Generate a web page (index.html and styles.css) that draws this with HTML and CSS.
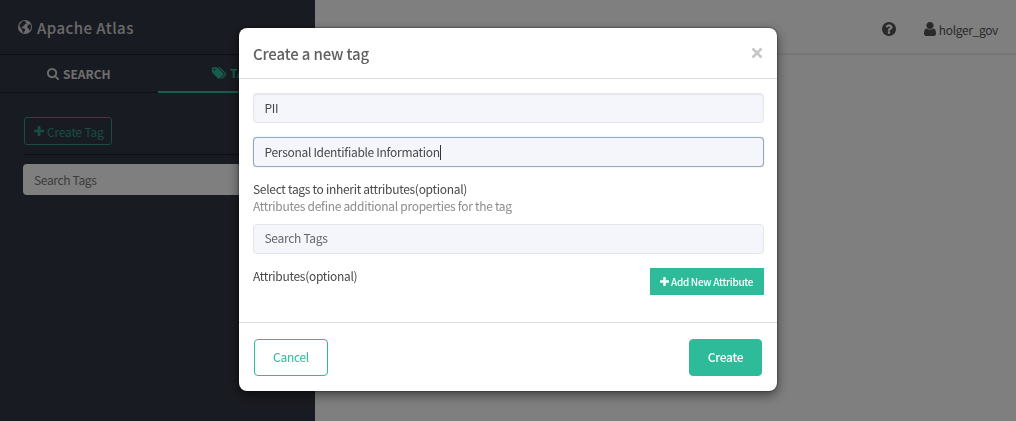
FILE: index.html
```html
<!DOCTYPE html>
<html lang="en">
<head>
<meta charset="utf-8">
<title>Apache Atlas</title>
<link rel="stylesheet" href="styles.css">
</head>
<body>
<div class="page">
  <aside class="sidebar">
    <div class="brand">
      <svg class="globe" viewBox="0 0 14 14"><circle cx="7" cy="7" r="7"/><path class="land" d="M4.2 1.5 6 .8 7.6 1.2 7 2.2 8.3 2.4 8.6 3.4 7.2 4 6.4 5.2 5.2 5.8 5.5 7.2 4.2 6.6 3.3 7.2 4.3 8.3 6 8.5 7.3 9.6 6.7 11 5.5 12.8 4.6 12.5 4.3 10.2 2.9 8.6 1.5 6.3 1.7 4.4ZM9.6 5.5 11 4.3 12.6 4.8 13.1 7 12.5 9.3 11.2 10.4 10.7 8.5 9.3 7.7Z"/></svg>
      <span>Apache Atlas</span>
    </div>
    <nav class="tabs">
      <a class="tab"><svg class="icon-search" viewBox="64 128 1664 1664"><path d="M1216 832q0-185-131.500-316.500t-316.500-131.500-316.500 131.500-131.500 316.500 131.500 316.500 316.500 131.500 316.500-131.500 131.500-316.500zm512 832q0 52-38 90t-90 38q-54 0-90-38l-343-342q-179 124-399 124-143 0-273.500-55.500t-225-150-150-225-55.500-273.500 55.500-273.500 150-225 225-150 273.500-55.500 273.500 55.500 225 150 150 225 55.500 273.500q0 220-124 399l343 343q37 37 37 90z"/></svg><span>SEARCH</span></a>
      <a class="tab active"><svg class="icon-tags" viewBox="192 256 1835 1516"><path d="M576 448q0-53-37.500-90.500t-90.500-37.500-90.500 37.500-37.500 90.500 37.500 90.500 90.500 37.500 90.500-37.500 37.500-90.500zm1067 576q0 53-37 90l-491 492q-39 37-91 37-53 0-90-37l-715-716q-38-37-64.500-101t-26.500-117v-416q0-52 38-90t90-38h416q53 0 117 26.500t102 64.500l715 714q37 39 37 91zm384 0q0 53-37 90l-491 492q-39 37-91 37-36 0-59-14t-53-45l470-470q37-37 37-90 0-52-37-91l-715-714q-38-38-102-64.500t-117-26.500h224q53 0 117 26.500t102 64.500l715 714q37 39 37 91z" transform="translate(64 128)"/></svg><span>TAGS</span></a>
    </nav>
    <div class="side-body">
      <button class="create-tag"><svg class="icon-plus" viewBox="192 128 1408 1408"><path d="M1600 736v192q0 40-28 68t-68 28h-416v416q0 40-28 68t-68 28h-192q-40 0-68-28t-28-68v-416h-416q-40 0-68-28t-28-68v-192q0-40 28-68t68-28h416v-416q0-40 28-68t68-28h192q40 0 68 28t28 68v416h416q40 0 68 28t28 68z"/></svg><span>Create Tag</span></button>
      <div class="rule"></div>
      <div class="side-search">Search Tags</div>
    </div>
  </aside>
  <main class="content">
    <header class="topbar">
      <svg class="icon-help" viewBox="128 128 1536 1536"><path d="M1024 1376v-192q0-14-9-23t-23-9h-192q-14 0-23 9t-9 23v192q0 14 9 23t23 9h192q14 0 23-9t9-23zm256-672q0-88-55.500-163t-138.500-116-170-41q-243 0-371 213-15 24 8 42l132 100q7 6 19 6 16 0 25-12 53-68 86-92 34-24 86-24 48 0 85.500 26t37.500 59q0 38-20 61t-68 45q-63 28-115.500 86.500t-52.500 125.500v36q0 14 9 23t23 9h192q14 0 23-9t9-23q0-19 21.500-49.500t54.500-49.500q32-18 49-28.500t46-35 44.500-48 28-60.500 12.500-81zm384 192q0 209-103 385.500t-279.500 279.500-385.500 103-385.500-103-279.500-279.500-103-385.500 103-385.500 279.500-279.500 385.500-103 385.500 103 279.500 279.500 103 385.500z"/></svg>
      <svg class="icon-user" viewBox="256 128 1280 1536" preserveAspectRatio="none"><path d="M1536 1399q0 109-62.500 187t-150.500 78h-854q-88 0-150.500-78t-62.500-187q0-85 8.500-160.500t31.500-152 58.500-131 94-89 134.500-34.500q131 128 313 128t313-128q76 0 134.500 34.500t94 89 58.500 131 31.500 152 8.500 160.500zm-256-887q0 159-112.500 271.500t-271.500 112.500-271.500-112.500-112.500-271.500 112.500-271.500 271.500-112.500 271.500 112.500 112.500 271.500z"/></svg>
      <span class="username">holger_gov</span>
    </header>
  </main>
</div>
<div class="backdrop">
  <section class="modal">
    <header class="modal-header">
      <h1 class="modal-title">Create a new tag</h1>
      <svg class="close" viewBox="0 0 12 12"><path d="M1.500 1.500 10.500 10.500M10.500 1.500 1.500 10.500"/></svg>
    </header>
    <div class="modal-body">
      <div class="field inset"><span class="pii">PII</span></div>
      <div class="field focused"><span class="value">Personal Identifiable Information</span><i class="caret"></i></div>
      <div class="labels">
        <div class="label"><span class="inherit">Select tags to inherit attributes(optional)</span></div>
        <div class="hint"><span>Attributes define additional properties for the tag</span></div>
      </div>
      <div class="field placeholder"><span>Search Tags</span></div>
      <div class="attributes">
        <div class="label"><span>Attributes(optional)</span></div>
        <button class="add"><svg class="icon-plus" viewBox="192 128 1408 1408"><path d="M1600 736v192q0 40-28 68t-68 28h-416v416q0 40-28 68t-68 28h-192q-40 0-68-28t-28-68v-416h-416q-40 0-68-28t-28-68v-192q0-40 28-68t68-28h416v-416q0-40 28-68t68-28h192q40 0 68 28t28 68v416h416q40 0 68 28t28 68z"/></svg><span>Add New Attribute</span></button>
      </div>
    </div>
    <footer class="modal-footer">
      <button class="btn cancel">Cancel</button>
      <button class="btn create">Create</button>
    </footer>
  </section>
</div>
</body>
</html>
```
FILE: styles.css
```css
* { box-sizing: border-box; }
body {
  margin: 0;
  height: 421px;
  overflow: hidden;
  font-family: "Noto Sans CJK SC", "Noto Sans", sans-serif;
  font-size: 12px;
  line-height: 16px;
  letter-spacing: -0.3px;
  color: #484848;
}
button { font: inherit; letter-spacing: inherit; padding: 0; margin: 0; white-space: nowrap; }
svg { fill: currentColor; flex: none; display: block; }
.page { display: flex; height: 421px; background: #fff; }
.sidebar { width: 315px; background: #333744; }
.brand {
  display: flex;
  align-items: center;
  height: 55px;
  padding: 0 0 0 18px;
  gap: 5px;
  border-bottom: 1px solid #1c1e24;
  color: #d4d4d4;
  font-size: 15px;
  font-weight: 500;
  letter-spacing: 0.45px;
}
.brand span { padding-top: 2px; }
.globe { width: 14px; height: 14px; }
.land { fill: #333744; }
.tabs { display: flex; height: 38px; border-bottom: 1px solid #1c1e24; }
.tab {
  display: flex;
  align-items: center;
  justify-content: center;
  gap: 4px;
  width: 158px;
  height: 38px;
  color: #ddd;
  font-weight: 700;
  letter-spacing: 0;
}
.active { color: #2dbb9a; border-bottom: 2px solid #2dbb9a; }
.icon-search { width: 12px; height: 12px; }
.icon-tags { width: 14px; height: 12px; }
.side-body { padding: 24px 23px; }
.create-tag {
  display: flex;
  align-items: center;
  gap: 3px;
  width: 88px;
  height: 28px;
  margin-left: 1px;
  padding-left: 9px;
  border: 1px solid #2dbb9a;
  border-radius: 3px;
  background: none;
  color: #2dbb9a;
  letter-spacing: -0.2px;
  opacity: .75;
}
.icon-plus { width: 10px; height: 10px; }
.create-tag span { padding-top: 1px; }
.rule { height: 1px; margin: 9px 0; background: #1c1e24; }
.side-search {
  height: 31px;
  padding: 8px 11px;
  border-radius: 4px;
  background: #fff;
  color: #777;
  letter-spacing: -0.35px;
}
.content { flex: 1; }
.topbar {
  display: flex;
  align-items: center;
  justify-content: flex-end;
  height: 55px;
  padding: 5px 18px 0 0;
  border-bottom: 2px solid #eee;
  color: #555;
}
.icon-help { width: 14px; height: 14px; margin-right: 28px; }
.icon-user { width: 12px; height: 14px; margin-right: 3px; }
.username { padding-top: 1px; letter-spacing: -0.35px; }
.backdrop {
  position: fixed;
  inset: 0;
  padding: 28px 239px;
  background: rgba(0, 0, 0, .5);
}
.modal {
  width: 538px;
  height: 363px;
  border-radius: 8px;
  background: #fff;
  box-shadow: 0 4px 12px rgba(0, 0, 0, .5), 0 0 2px rgba(0, 0, 0, .8);
}
.modal-header {
  display: flex;
  align-items: center;
  justify-content: space-between;
  height: 51px;
  padding: 0 14px;
  border-bottom: 1px solid #ddd;
}
.modal-title { margin: 0; padding-top: 2px; font-size: 15px; font-weight: 500; letter-spacing: -0.15px; color: #606060; }
.close { width: 12px; height: 12px; stroke: #c8c8c8; stroke-width: 2.8; }
.modal-body { height: 243px; padding: 14px 13px 0 14px; }
.field {
  display: flex;
  align-items: center;
  height: 30px;
  padding: 0 10.5px;
  border: 1px solid #e4e5ec;
  border-radius: 4px;
  background: #f5f6fb;
}
.inset { box-shadow: inset 0 1px 1px #e6e7ed; }
.focused { margin-top: 14px; border: 1px solid #93a8b8; box-shadow: 0 0 1px #93a8b8; }
.caret { width: 1px; height: 15px; background: #333; }
.labels { height: 57px; padding-top: 14px; }
.hint { color: #8c8c8c; line-height: 18px; }
.placeholder { padding-bottom: 2px; color: #666; }
.attributes { display: flex; justify-content: space-between; padding-top: 14px; }
.add {
  display: flex;
  align-items: center;
  gap: 2px;
  width: 114px;
  height: 27px;
  padding-left: 10px;
  border: 0;
  background: #2dbb9a;
  color: #fff;
  font-size: 10px;
  font-weight: 500;
}
.add .icon-plus { width: 9px; height: 9px; }
.modal-footer {
  display: flex;
  justify-content: space-between;
  padding: 16px 15px;
  border-top: 1px solid #ddd;
}
.btn { height: 37px; padding-bottom: 2px; border: 1px solid #2dbb9a; border-radius: 4px; }
.cancel { width: 74px; background: #fff; color: #2dbb9a; }
.create { width: 73px; background: #2dbb9a; color: #fff; font-weight: 500; }
```
